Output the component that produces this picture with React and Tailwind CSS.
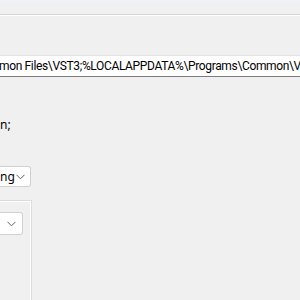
import React from "react";

const Chevron = ({ className = "" }) => (
  <svg width="9" height="6" viewBox="0 0 9 6" className={className}>
    <path d="M0.5 0.8 L4.5 4.8 L8.5 0.8" fill="none" stroke="#5f5f5f" strokeWidth="1" />
  </svg>
);

export default function App() {
  return (
    <div
      className="w-[300px] h-[300px] overflow-hidden bg-[#f0f0f0] text-[12px] text-black"
      style={{ fontFamily: '"Noto Sans", "Open Sans", sans-serif' }}
    >
      <div className="h-[2px] bg-[#eef3f7]" />
      <div className="h-[12px]" />
      <div className="h-px bg-[#d4d4d4]" />
      <div className="h-px bg-white" />
      <div className="h-[39px]" />
      <div className="h-[22px] bg-white border-t border-[#e3e3e3] border-b border-b-[#7c7c7c] flex items-center overflow-hidden">
        <span
          className="whitespace-nowrap ml-[-1px] text-[12px] tracking-[-0.35px]"
          style={{ fontFamily: 'Roboto, "Liberation Sans", sans-serif' }}
        >
          mon Files\VST3;%LOCALAPPDATA%\Programs\Common\VST3
        </span>
      </div>
      <div className="h-[40px]" />
      <div className="h-[15px] leading-[15px] whitespace-nowrap">n;</div>
      <div className="h-[34px]" />
      <div className="w-[31px] h-[21px] bg-white border border-l-0 border-[#d0d0d0] rounded-r-[3px] flex items-center justify-between overflow-hidden">
        <span className="whitespace-nowrap">ng</span>
        <Chevron className="mr-[5px]" />
      </div>
      <div className="h-[13px]" />
      <div className="w-[32px] h-[100px] border-t border-r border-[#dcdcdc] shadow-[inset_-1px_1px_0_#ffffff] pt-[11px]">
        <div className="w-[23px] h-[23px] bg-white border border-l-0 border-[#d0d0d0] rounded-r-[3px] flex items-center justify-end">
          <Chevron className="mr-[6px]" />
        </div>
      </div>
    </div>
  );
}
